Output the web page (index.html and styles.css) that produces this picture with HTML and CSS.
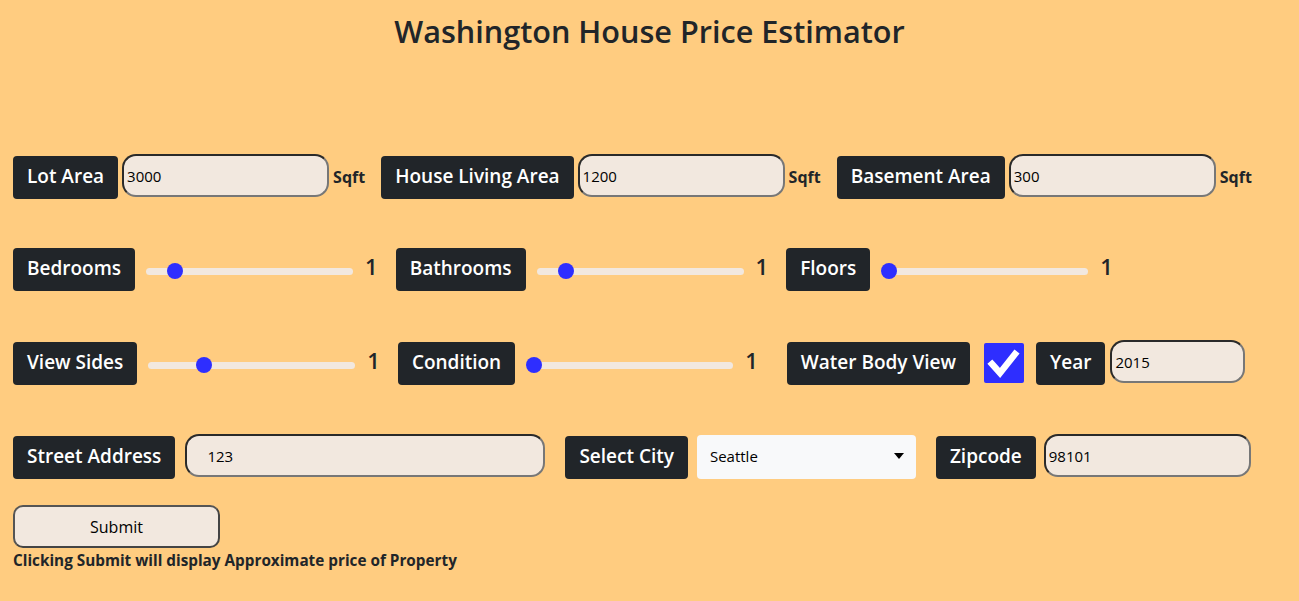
FILE: index.html
```html
<!DOCTYPE html>
<html lang="en">
<head>
<meta charset="utf-8">
<title>Washington House Price Estimator</title>
<link rel="stylesheet" href="styles.css">
</head>
<body>
<h1 class="title">Washington House Price Estimator</h1>
<form class="form">
  <div class="row row-1">
    <span class="tag">Lot Area</span>
    <input class="field" type="text" value="3000">
    <span class="unit">Sqft</span>
    <span class="tag">House Living Area</span>
    <input class="field" type="text" value="1200">
    <span class="unit">Sqft</span>
    <span class="tag">Basement Area</span>
    <input class="field" type="text" value="300">
    <span class="unit">Sqft</span>
  </div>
  <div class="row row-2">
    <span class="tag">Bedrooms</span>
    <input class="range" type="range" min="0" max="9" value="1">
    <span class="val">1</span>
    <span class="tag">Bathrooms</span>
    <input class="range" type="range" min="0" max="9" value="1">
    <span class="val">1</span>
    <span class="tag">Floors</span>
    <input class="range" type="range" min="1" max="4" value="1">
    <span class="val">1</span>
  </div>
  <div class="row row-3">
    <span class="tag">View Sides</span>
    <input class="range" type="range" min="0" max="4" value="1">
    <span class="val">1</span>
    <span class="tag">Condition</span>
    <input class="range" type="range" min="1" max="5" value="1">
    <span class="val val-wide">1</span>
    <span class="tag">Water Body View</span>
    <span class="check" role="checkbox" aria-checked="true">
      <svg viewBox="0 0 40 40" width="40" height="40"><path d="M8 21 L16 30 L31 11" fill="none" stroke="#fff" stroke-width="6.5" stroke-linecap="square" stroke-linejoin="miter"/></svg>
    </span>
    <span class="tag">Year</span>
    <input class="field field-year" type="text" value="2015">
  </div>
  <div class="row row-4">
    <span class="tag">Street Address</span>
    <input class="field field-street" type="text" value="123">
    <span class="tag">Select City</span>
    <div class="select">
      <span class="select-text">Seattle</span>
      <svg class="caret" viewBox="0 0 10 6" width="10" height="6"><path d="M0 0 H10 L5 6 Z" fill="#000"/></svg>
    </div>
    <span class="tag">Zipcode</span>
    <input class="field" type="text" value="98101">
  </div>
  <button class="submit" type="button">Submit</button>
  <p class="note">Clicking Submit will display Approximate price of Property</p>
</form>
</body>
</html>
```

FILE: styles.css
```css
* { box-sizing: border-box; }
html, body { margin: 0; }
body {
  background: #ffcc80;
  font-family: "Open Sans", "Noto Sans", sans-serif;
  color: #212529;
  padding: 0 13px;
  height: 601px;
  overflow: hidden;
}
.title {
  margin: 0;
  padding-top: 11px;
  text-align: center;
  font-size: 30.6px;
  line-height: 40px;
  font-weight: 600;
  color: #212529;
}
.form { margin: 0; }
.row {
  display: flex;
  align-items: center;
  height: 44px;
}
.row-1 { margin-top: 104px; }
.row-2 { margin-top: 48px; }
.row-3 { margin-top: 50px; }
.row-4 { margin-top: 50px; }
.tag {
  background: #212529;
  color: #fff;
  border-radius: 4px;
  height: 43px;
  line-height: 41px;
  padding: 0 14px 2px;
  font-size: 19px;
  font-weight: 600;
  white-space: nowrap;
}
.field {
  width: 207px;
  height: 43px;
  margin-left: 4px;
  margin-top: -3px;
  border: 2px solid;
  border-color: #2a2a2a #777 #777 #2a2a2a;
  border-radius: 14px;
  background: #f2e8df;
  font-family: inherit;
  font-size: 15px;
  color: #000;
  padding: 0 3px;
  outline: none;
}
.unit {
  margin-left: 4px;
  margin-right: 16px;
  font-size: 16px;
  font-weight: 700;
}
.range {
  -webkit-appearance: none;
  appearance: none;
  width: 207px;
  height: 7px;
  margin: 4px 0 0 11px;
  background: #f2e8df;
  border-radius: 4px;
  outline: none;
}
.range::-webkit-slider-thumb {
  -webkit-appearance: none;
  appearance: none;
  width: 16px;
  height: 16px;
  border-radius: 50%;
  background: #2e2eff;
  border: none;
}
.val {
  margin-left: 12px;
  margin-right: 18px;
  font-size: 22px;
  font-weight: 600;
  margin-top: -6px;
}
.val-wide { margin-right: 29px; }
.check {
  width: 40px;
  height: 40px;
  margin: 0 12px 0 14px;
  background: #2e2eff;
  border-radius: 2px;
  display: flex;
}
.field-year { width: 135px; margin-left: 5px; }
.field-street { width: 360px; margin-left: 10px; margin-right: 20px; padding-left: 20px; }
.select {
  width: 219px;
  height: 44px;
  margin: 0 20px 0 9px;
  background: #f8f9fa;
  border-radius: 4px;
  display: flex;
  align-items: center;
  justify-content: space-between;
  padding: 0 12px 2px 13px;
  font-size: 15px;
  color: #000;
}
.row-4 .field { margin-left: 8px; }
.row-4 .field-street { margin-left: 10px; }
.submit {
  display: block;
  margin-top: 26px;
  width: 207px;
  height: 43px;
  background: #f2e8df;
  border: 2px solid;
  border-color: #555 #444 #444 #555;
  border-radius: 10px;
  font-family: inherit;
  font-size: 16px;
  color: #000;
}
.note {
  margin: 2px 0 0;
  font-size: 15.3px;
  font-weight: 700;
}
```
